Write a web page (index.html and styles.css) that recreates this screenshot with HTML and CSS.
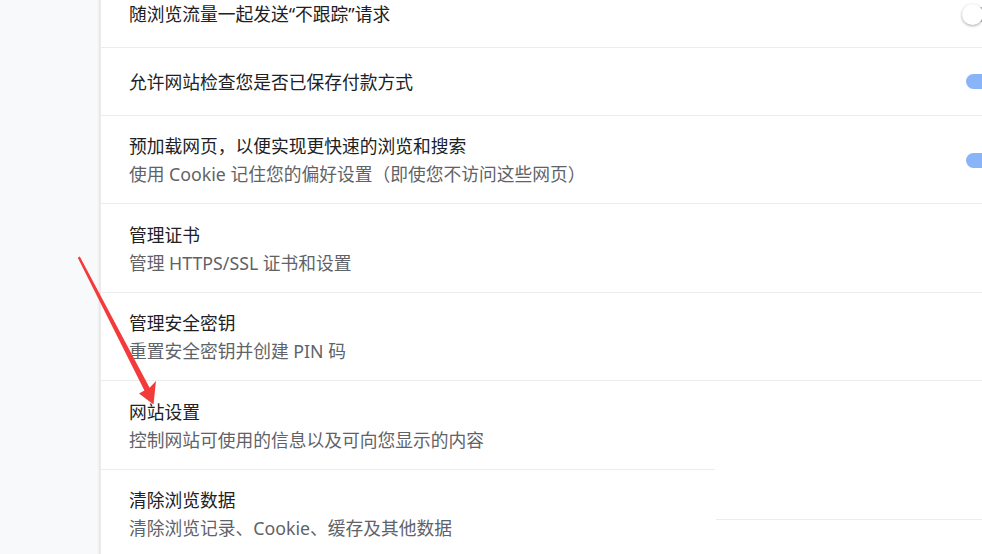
FILE: index.html
```html
<!DOCTYPE html>
<html lang="zh-CN">
<head>
<meta charset="utf-8">
<title>设置</title>
<link rel="stylesheet" href="styles.css">
</head>
<body>
<main class="page">
  <section class="card">
    <div class="row single">
      <div class="text"><div class="title">随浏览流量一起发送“不跟踪”请求</div></div>
      <span class="toggle off"><span class="knob"></span></span>
    </div>
    <div class="row single">
      <div class="text"><div class="title">允许网站检查您是否已保存付款方式</div></div>
      <span class="toggle on"><span class="knob"></span></span>
    </div>
    <div class="row double">
      <div class="text">
        <div class="title">预加载网页，以便实现更快速的浏览和搜索</div>
        <div class="sub">使用 Cookie 记住您的偏好设置（即使您不访问这些网页）</div>
      </div>
      <span class="toggle on"><span class="knob"></span></span>
    </div>
    <div class="row double">
      <div class="text">
        <div class="title">管理证书</div>
        <div class="sub">管理 HTTPS/SSL 证书和设置</div>
      </div>
    </div>
    <div class="row double">
      <div class="text">
        <div class="title">管理安全密钥</div>
        <div class="sub">重置安全密钥并创建 PIN 码</div>
      </div>
    </div>
    <div class="row double">
      <div class="text">
        <div class="title">网站设置</div>
        <div class="sub">控制网站可使用的信息以及可向您显示的内容</div>
      </div>
    </div>
    <div class="row double split">
      <div class="text">
        <div class="title">清除浏览数据</div>
        <div class="sub">清除浏览记录、Cookie、缓存及其他数据</div>
      </div>
    </div>
  </section>
</main>
<svg class="arrow" width="982" height="554" viewBox="0 0 982 554" aria-hidden="true">
  <path d="M77.8 257.8 L79.8 256.6 L149.6 387.8 L156 381 L153.5 404.5 L139 393.5 L144.4 390.6 Z" fill="#f43b3b"/>
</svg>
</body>
</html>
```

FILE: styles.css
```css
html, body {
  margin: 0;
  padding: 0;
  overflow: hidden;
  width: 982px;
  height: 554px;
}

body {
  background: #f8f9fa;
  font-family: "Noto Sans", "Noto Sans CJK SC", sans-serif;
  font-size: 17.75px;
  color: #202124;
}

.page {
  display: flex;
  padding-left: 100px;
}

.card {
  flex: none;
  width: 930px;
  margin-top: -20.5px;
  background: #ffffff;
  border-left: 1px solid #ebebeb;
  box-shadow: -1px 0 2px rgba(60, 64, 67, 0.12);
}

.row {
  display: flex;
  align-items: center;
  padding: 0 28px;
  border-top: 1px solid #ececec;
}

.row.single {
  padding-top: 19.5px;
  padding-bottom: 19px;
}

.row.double {
  padding-top: 16.5px;
  padding-bottom: 15px;
}

.row.split {
  border-top: 1px solid transparent;
  background-image:
    linear-gradient(#ececec, #ececec),
    linear-gradient(#ececec, #ececec);
  background-repeat: no-repeat;
  background-position: 0 0, 615px 50px;
  background-size: 614px 1px, 100% 1px;
  background-origin: border-box;
  background-clip: border-box;
}

.text {
  flex: 1;
  min-width: 0;
}

.title {
  line-height: 28px;
  white-space: nowrap;
}

.sub {
  line-height: 28px;
  color: #5f6368;
  white-space: nowrap;
}

.toggle {
  position: relative;
  flex: none;
  width: 37px;
  height: 15px;
  border-radius: 8px;
}

.toggle.off {
  background: #bdc1c6;
}

.toggle.on {
  background: #8ab4f8;
}

.knob {
  position: absolute;
  top: -3px;
  width: 21px;
  height: 21px;
  border-radius: 50%;
  box-shadow: 0 1px 3px rgba(0, 0, 0, 0.35);
}

.toggle.off .knob {
  left: -4px;
  background: #ffffff;
}

.toggle.on .knob {
  right: -4px;
  background: #1a73e8;
}

.arrow {
  position: absolute;
  left: 0;
  top: 0;
  pointer-events: none;
}
```
